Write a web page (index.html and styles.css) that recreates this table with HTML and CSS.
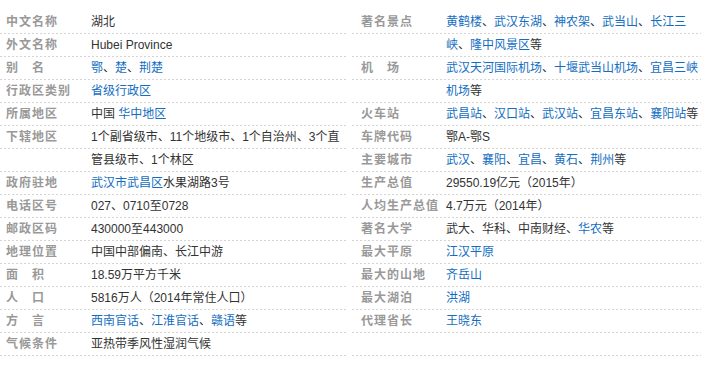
FILE: index.html
```html
<!DOCTYPE html>
<html lang="zh-CN">
<head>
<meta charset="utf-8">
<title>湖北 基本信息</title>
<link rel="stylesheet" href="styles.css">
</head>
<body>
<div class="info">
  <dl class="col col-left">
    <div class="row"><dt>中文名称</dt><dd>湖北</dd></div>
    <div class="row"><dt>外文名称</dt><dd>Hubei Province</dd></div>
    <div class="row"><dt>别&emsp;名</dt><dd><a>鄂</a>、<a>楚</a>、<a>荆楚</a></dd></div>
    <div class="row"><dt>行政区类别</dt><dd><a>省级行政区</a></dd></div>
    <div class="row"><dt>所属地区</dt><dd>中国 <a>华中地区</a></dd></div>
    <div class="row"><dt>下辖地区</dt><dd>1个副省级市、11个地级市、1个自治州、3个直</dd></div>
    <div class="row"><dt></dt><dd>管县级市、1个林区</dd></div>
    <div class="row"><dt>政府驻地</dt><dd><a>武汉市</a><a>武昌区</a>水果湖路3号</dd></div>
    <div class="row"><dt>电话区号</dt><dd>027、0710至0728</dd></div>
    <div class="row"><dt>邮政区码</dt><dd>430000至443000</dd></div>
    <div class="row"><dt>地理位置</dt><dd>中国中部偏南、长江中游</dd></div>
    <div class="row"><dt>面&emsp;积</dt><dd>18.59万平方千米</dd></div>
    <div class="row"><dt>人&emsp;口</dt><dd>5816万人（2014年常住人口）</dd></div>
    <div class="row"><dt>方&emsp;言</dt><dd><a>西南官话</a>、<a>江淮官话</a>、<a>赣语</a>等</dd></div>
    <div class="row"><dt>气候条件</dt><dd>亚热带季风性湿润气候</dd></div>
  </dl>
  <dl class="col col-right">
    <div class="row"><dt>著名景点</dt><dd><a>黄鹤楼</a>、<a>武汉东湖</a>、<a>神农架</a>、<a>武当山</a>、<a>长江三</a></dd></div>
    <div class="row"><dt></dt><dd><a>峡</a>、<a>隆中风景区</a>等</dd></div>
    <div class="row"><dt>机&emsp;场</dt><dd><a>武汉天河国际机场</a>、<a>十堰武当山机场</a>、<a>宜昌三峡</a></dd></div>
    <div class="row"><dt></dt><dd><a>机场</a>等</dd></div>
    <div class="row"><dt>火车站</dt><dd><a>武昌站</a>、<a>汉口站</a>、<a>武汉站</a>、<a>宜昌东站</a>、<a>襄阳站</a>等</dd></div>
    <div class="row"><dt>车牌代码</dt><dd>鄂A-鄂S</dd></div>
    <div class="row"><dt>主要城市</dt><dd><a>武汉</a>、<a>襄阳</a>、<a>宜昌</a>、<a>黄石</a>、<a>荆州</a>等</dd></div>
    <div class="row"><dt>生产总值</dt><dd>29550.19亿元（2015年）</dd></div>
    <div class="row"><dt>人均生产总值</dt><dd>4.7万元（2014年）</dd></div>
    <div class="row"><dt>著名大学</dt><dd>武大、华科、中南财经、<a>华农</a>等</dd></div>
    <div class="row"><dt>最大平原</dt><dd><a>江汉平原</a></dd></div>
    <div class="row"><dt>最大的山地</dt><dd><a>齐岳山</a></dd></div>
    <div class="row"><dt>最大湖泊</dt><dd><a>洪湖</a></dd></div>
    <div class="row"><dt>代理省长</dt><dd><a>王晓东</a></dd></div>
    <div class="row"><dt></dt><dd></dd></div>
  </dl>
</div>
</body>
</html>
```

FILE: styles.css
```css
html, body {
  margin: 0;
  padding: 0;
  background: #fff;
}

body {
  font-family: "Liberation Sans", "Noto Sans CJK SC", sans-serif;
  font-size: 12px;
  color: #333;
}

.info {
  display: flex;
  gap: 4px;
  padding-top: 11px;
}

.col {
  margin: 0;
  display: flex;
  flex-direction: column;
}

.col-left {
  width: 348px;
}

.col-right {
  width: 349px;
}

.row {
  display: flex;
  height: 22px;
  line-height: 22px;
  padding-bottom: 1px;
  background-image: repeating-linear-gradient(to right, #d4d4d4 0 2px, transparent 2px 4px);
  background-size: 100% 1px;
  background-repeat: no-repeat;
  background-position: left bottom;
  white-space: nowrap;
}

dt {
  width: 85px;
  flex: none;
  padding-left: 6px;
  font-weight: bold;
  color: #999;
  letter-spacing: 1px;
}

.col-right dt {
  padding-left: 9px;
}

dd {
  margin: 0;
  flex: 1;
  overflow: hidden;
}

a {
  color: #136ec2;
  text-decoration: none;
}
```
